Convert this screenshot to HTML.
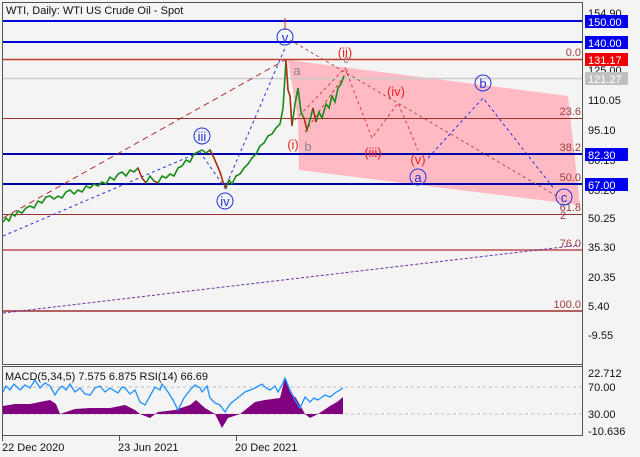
<!DOCTYPE html>
<html><head><meta charset="utf-8"><style>
html,body{margin:0;padding:0;background:#f4f4f4;}
svg{display:block;font-family:"Liberation Sans",sans-serif;}
</style></head><body>
<svg width="640" height="457" viewBox="0 0 640 457" xmlns="http://www.w3.org/2000/svg">
<rect width="640" height="457" fill="#f4f4f4"/>
<rect x="2.5" y="2.5" width="580" height="362" fill="#f4f4f4" stroke="#555" stroke-width="1"/>
<rect x="2.5" y="366.5" width="580" height="69" fill="#f4f4f4" stroke="#555" stroke-width="1"/>
<polygon points="288,60 568,96 580,205 299,170 298,120" fill="#ffb6c1" opacity="0.95"/>
<line x1="3" y1="21" x2="582" y2="21" stroke="#0000dd" stroke-width="2"/>
<line x1="3" y1="42" x2="582" y2="42" stroke="#0000dd" stroke-width="2"/>
<line x1="3" y1="59.5" x2="582" y2="59.5" stroke="#c0392b" stroke-width="1.5"/>
<line x1="3" y1="78.5" x2="582" y2="78.5" stroke="#cccccc" stroke-width="1.5"/>
<line x1="3" y1="118.5" x2="582" y2="118.5" stroke="#a03030" stroke-width="1"/>
<line x1="3" y1="154" x2="582" y2="154" stroke="#0000aa" stroke-width="2"/>
<line x1="3" y1="184" x2="582" y2="184" stroke="#0000aa" stroke-width="2"/>
<line x1="3" y1="214.5" x2="582" y2="214.5" stroke="#a03030" stroke-width="1"/>
<line x1="3" y1="250" x2="582" y2="250" stroke="#c77" stroke-width="2"/>
<line x1="3" y1="311" x2="582" y2="311" stroke="#a03030" stroke-width="1.5"/>
<g font-size="11" fill="#a04040" text-anchor="end">
<text x="581" y="56">0.0</text><text x="581" y="115">23.6</text><text x="581" y="151">38.2</text>
<text x="581" y="181">50.0</text><text x="581" y="211">61.8</text><text x="581" y="247">76.0</text><text x="581" y="308">100.0</text>
</g>
<line x1="3" y1="218" x2="285" y2="60" stroke="#b03030" stroke-width="1" stroke-dasharray="6,4"/>
<line x1="3" y1="236" x2="200" y2="152" stroke="#2233dd" stroke-width="1" stroke-dasharray="3,3"/>
<polyline points="200,152 225,188 285,48" fill="none" stroke="#2233dd" stroke-width="1" stroke-dasharray="3,3"/>
<line x1="3" y1="313" x2="580" y2="245" stroke="#7030a0" stroke-width="1" stroke-dasharray="3,2"/>
<polyline points="290,40 560,198" fill="none" stroke="#b05050" stroke-width="1" stroke-dasharray="3,3"/>
<polyline points="295,120 345,68 372,138 398,103 418,150" fill="none" stroke="#ee3333" stroke-width="1" stroke-dasharray="3,3"/>
<polyline points="305,132 348,70" fill="none" stroke="#ee3333" stroke-width="1" stroke-dasharray="3,3"/>
<polyline points="428,158 483,98 555,190" fill="none" stroke="#2233dd" stroke-width="1" stroke-dasharray="3,3"/>
<line x1="285" y1="18" x2="285" y2="30" stroke="#c0392b" stroke-width="1"/>
<polyline points="3,222 6,218 9,221 12,214 15,216 18,211 22,213 26,208 30,206 34,208 38,201 42,203 46,197 50,196 54,199 58,196 62,198 66,192 70,190 74,194 78,190 82,192 86,186 90,188 94,184 98,186 102,182 106,184 110,177 114,180 118,174 122,172 126,176 130,170 134,172 138,168 142,178 146,183 150,176 154,181 158,183 162,176 166,178 170,174 174,176 178,168 182,166 186,160 190,162 194,154 198,152 202,150 206,153 210,150 214,158 217,165 220,172 223,182 226,188 229,180 232,184 236,176 240,174 244,168 248,164 252,158 256,154 260,146 264,143 268,136 272,134 276,128 280,124 283,108 286,60 288,90 290,96 292,126 295,104 298,88 301,112 304,118 307,130 310,120 313,108 316,122 319,112 322,118 326,104 329,108 332,96 335,102 338,88 341,84 344,76"
 fill="none" stroke="#1a8a1a" stroke-width="1.6"/>
<g fill="none" stroke="#e01010" stroke-width="1.2">
<polyline points="138,168 142,178 146,183"/><polyline points="154,181 158,183"/>
<polyline points="210,150 214,158 217,165 220,172 223,182 226,188"/>
<polyline points="286,60 288,90 290,96 292,126"/><polyline points="304,118 307,130"/><polyline points="313,108 316,122"/>
</g>
<g font-size="13" text-anchor="middle">
<g fill="none" stroke="#2233dd" stroke-width="1">
<circle cx="285" cy="37" r="8"/><circle cx="202" cy="136" r="8"/><circle cx="225" cy="201" r="8"/>
<circle cx="483" cy="83" r="8"/><circle cx="418" cy="177" r="8"/><circle cx="564" cy="197" r="8"/>
</g>
<g fill="#2233dd"><text x="285" y="42">v</text><text x="202" y="141">iii</text><text x="225" y="206">iv</text>
<text x="483" y="88">b</text><text x="418" y="182">a</text><text x="564" y="202">c</text></g>
<g fill="#ee2222"><text x="345" y="57">(ii)</text><text x="396" y="96">(iv)</text><text x="293" y="149">(i)</text>
<text x="373" y="157">(iii)</text><text x="418" y="164">(v)</text></g>
<g fill="#888"><text x="297" y="75">a</text><text x="308" y="151">b</text><text x="346" y="63" font-size="11">c</text></g>
<text x="563" y="219" fill="#a04040" font-size="11">2</text>
</g>
<text x="6" y="14" font-size="11" fill="#111">WTI, Daily:  WTI US Crude Oil - Spot</text>
<line x1="582.5" y1="2" x2="582.5" y2="436" stroke="#555"/>
<g font-size="11" fill="#111">
<text x="588" y="17">154.90</text><text x="588" y="74">125.00</text><text x="588" y="104">110.05</text>
<text x="588" y="134">95.10</text><text x="588" y="164">80.15</text><text x="588" y="194">65.20</text>
<text x="588" y="222">50.25</text><text x="588" y="251">35.30</text><text x="588" y="281">20.35</text>
<text x="588" y="310">5.40</text><text x="588" y="339">-9.55</text>
<text x="588" y="377">22.712</text><text x="588" y="391">70.00</text><text x="588" y="418">30.00</text><text x="588" y="435">-10.636</text>
</g>
<g font-size="11" fill="#fff">
<rect x="585" y="15" width="43" height="13" fill="#0000ee"/><text x="588" y="26">150.00</text>
<rect x="585" y="36" width="43" height="13" fill="#0000ee"/><text x="588" y="47">140.00</text>
<rect x="585" y="53" width="43" height="13" fill="#ee0000"/><text x="588" y="64">131.17</text>
<rect x="585" y="72" width="43" height="13" fill="#c0c0c0"/><text x="588" y="83">121.27</text>
<rect x="585" y="148" width="43" height="13" fill="#0000ee"/><text x="588" y="159">82.30</text>
<rect x="585" y="178" width="43" height="13" fill="#0000ee"/><text x="588" y="189">67.00</text>
</g>
<line x1="3" y1="387" x2="582" y2="387" stroke="#bbb" stroke-dasharray="3,3"/>
<line x1="3" y1="414" x2="582" y2="414" stroke="#bbb" stroke-dasharray="3,3"/>
<polygon points="3,414 3,406 15,404 30,404 40,402 50,400 56,404 60,414 75,409 90,408 110,408 125,405 135,410 140,414 150,418 158,412 175,410 190,405 196,400 205,408 215,414 222,428 228,418 240,414 255,402 265,400 280,398 285,378 290,392 296,398 305,414 310,418 318,414 330,406 337,402 343,397 343,414" fill="#800080"/>
<polyline points="3,392 6,386 10,390 14,384 20,390 25,385 30,388 35,380 40,388 45,383 50,386 55,395 58,390 62,386 66,390 70,384 75,392 80,388 85,394 90,395 95,388 100,386 105,392 110,388 118,393 122,387 125,388 130,394 135,390 140,402 145,405 150,396 155,387 160,390 162,384 168,392 173,400 178,410 184,398 190,390 195,385 200,388 202,392 207,386 210,398 215,403 220,405 225,412 230,404 235,400 240,396 245,392 250,390 255,388 262,384 266,388 270,390 275,386 278,392 282,385 285,378 290,390 295,400 300,408 305,397 310,402 314,398 318,400 325,395 330,397 335,393 340,390 343,388" fill="none" stroke="#1e90ff" stroke-width="1.3"/>
<text x="5" y="380" font-size="11" fill="#111">MACD(5,34,5) 7.575 6.875 RSI(14) 66.69</text>
<g stroke="#555"><line x1="2.5" y1="436" x2="2.5" y2="441"/><line x1="119.5" y1="436" x2="119.5" y2="441"/><line x1="236.5" y1="436" x2="236.5" y2="441"/></g>
<g font-size="11" fill="#111"><text x="2" y="451">22 Dec 2020</text><text x="118" y="451">23 Jun 2021</text><text x="235" y="451">20 Dec 2021</text></g>
</svg>
</body></html>
